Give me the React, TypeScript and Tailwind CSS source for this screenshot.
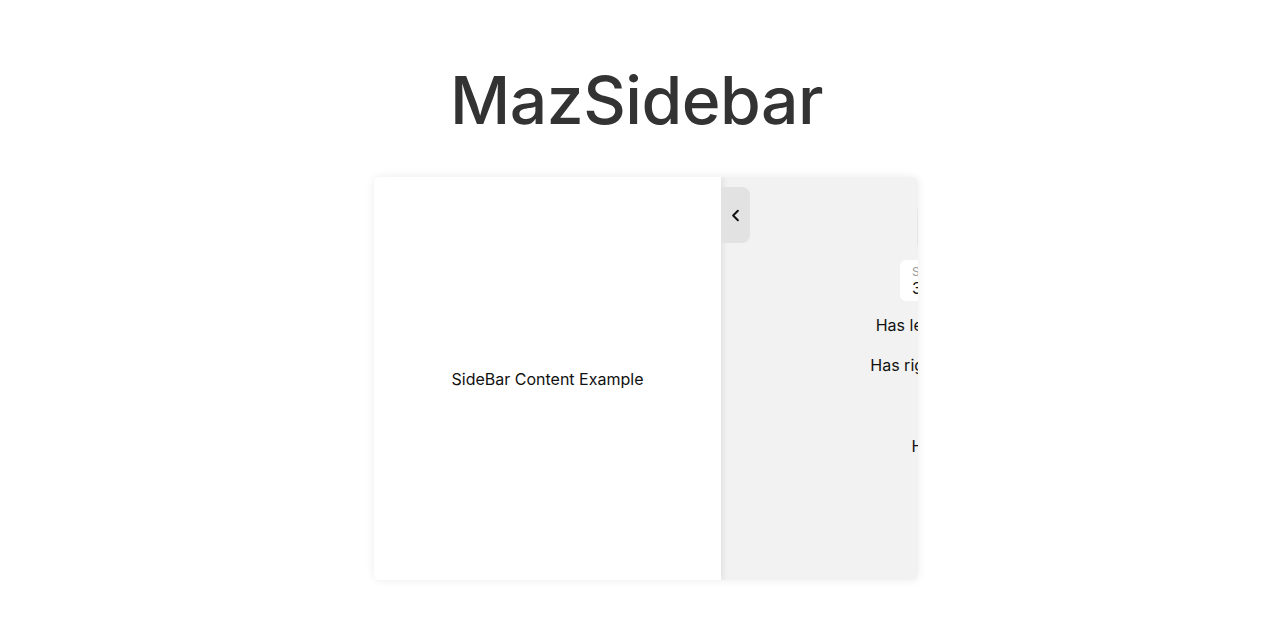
import { ChevronLeft } from "lucide-react";

export default function App() {
  return (
    <main
      className="flex min-h-[640px] w-full flex-col items-center bg-white"
      style={{ fontFamily: "Inter, 'Noto Sans', sans-serif" }}
    >
      <h1 className="mr-[7px] mt-[60px] text-[66px] font-medium leading-[80px] tracking-[-0.5px] text-[#333333]">
        MazSidebar
      </h1>
      <div className="ml-[12px] mt-[37px] flex h-[403px] w-[544px] overflow-hidden rounded-md shadow-[0_0_10px_rgba(0,0,0,0.08)]">
        <aside className="relative z-10 flex w-[347px] shrink-0 items-center justify-center bg-white text-[16px] text-[#111111] shadow-[2px_0_6px_rgba(0,0,0,0.08)]">
          SideBar Content Example
          <button
            type="button"
            className="absolute left-full top-[10px] flex h-[56px] w-[29px] items-center justify-center rounded-r-lg bg-[#e2e2e2] text-[#111111]"
          >
            <ChevronLeft size={19} strokeWidth={2.5} />
          </button>
        </aside>
        <section className="flex w-[428px] shrink-0 flex-col items-center bg-[#f2f2f2] pt-[28px] text-[16px] text-[#111111]">
          <button
            type="button"
            className="h-[45px] w-[36px] rounded-md bg-[#e6e6e6]"
          />
          <div className="mt-[10px] flex h-[41px] w-[70px] flex-col justify-center rounded-md bg-white px-[12px]">
            <span className="text-[12px] leading-[14px] text-[#9a9a9a]">Size</span>
            <span className="text-[16px] leading-[18px]">350px</span>
          </div>
          <p className="mt-[14px] leading-[20px]">Has left sidebar</p>
          <p className="mt-[20px] leading-[20px]">Has right sidebar</p>
          <p className="mt-[61px] pr-[12px] leading-[20px]">Hide</p>
        </section>
      </div>
    </main>
  );
}
